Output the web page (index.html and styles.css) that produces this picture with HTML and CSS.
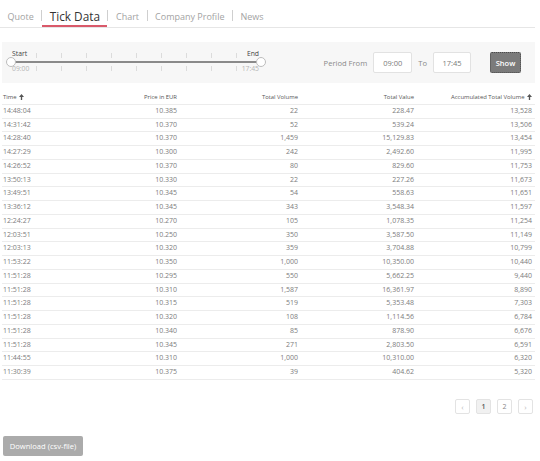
FILE: index.html
```html
<!DOCTYPE html>
<html>
<head>
<meta charset="utf-8">
<link rel="stylesheet" href="styles.css">
</head>
<body>
<div class="page">
  <nav class="tabs">
    <a class="tab">Quote</a><span class="sep"></span>
    <a class="tab active">Tick Data</a><span class="sep"></span>
    <a class="tab">Chart</a><span class="sep"></span>
    <a class="tab">Company Profile</a><span class="sep"></span>
    <a class="tab">News</a>
  </nav>

  <section class="panel">
    <div class="slider">
      <span class="lbl lbl-start">Start</span>
      <span class="lbl lbl-end">End</span>
      <span class="val val-start">09:00</span>
      <span class="val val-end">17:45</span>
      <div class="track"></div>
      <div class="ticks ticks-top"><i></i><i></i><i></i><i></i><i></i><i></i><i></i><i></i><i></i></div>
      <div class="ticks ticks-bottom"><i></i><i></i><i></i><i></i><i></i><i></i><i></i><i></i><i></i></div>
      <span class="handle handle-start"></span>
      <span class="handle handle-end"></span>
    </div>
    <div class="period">
      <span class="plabel">Period From</span>
      <span class="input">09:00</span>
      <span class="plabel">To</span>
      <span class="input">17:45</span>
      <button class="show">Show</button>
    </div>
  </section>

  <table class="ticks-table">
    <colgroup>
      <col class="c1"><col class="c2"><col class="c3"><col class="c4"><col class="c5">
    </colgroup>
    <thead>
      <tr>
        <th class="left">Time <svg class="arrow" viewBox="0 0 6 7" width="5" height="6"><path d="M3 0 L6 3.4 H3.8 V7 H2.2 V3.4 H0 Z" fill="#555"/></svg></th>
        <th>Price in EUR</th>
        <th>Total Volume</th>
        <th>Total Value</th>
        <th>Accumulated Total Volume <svg class="arrow" viewBox="0 0 6 7" width="5" height="6"><path d="M3 0 L6 3.4 H3.8 V7 H2.2 V3.4 H0 Z" fill="#555"/></svg></th>
      </tr>
    </thead>
    <tbody>
      <tr><td class="left">14:48:04</td><td>10.385</td><td>22</td><td>228.47</td><td>13,528</td></tr>
      <tr><td class="left">14:31:42</td><td>10.370</td><td>52</td><td>539.24</td><td>13,506</td></tr>
      <tr><td class="left">14:28:40</td><td>10.370</td><td>1,459</td><td>15,129.83</td><td>13,454</td></tr>
      <tr><td class="left">14:27:29</td><td>10.300</td><td>242</td><td>2,492.60</td><td>11,995</td></tr>
      <tr><td class="left">14:26:52</td><td>10.370</td><td>80</td><td>829.60</td><td>11,753</td></tr>
      <tr><td class="left">13:50:13</td><td>10.330</td><td>22</td><td>227.26</td><td>11,673</td></tr>
      <tr><td class="left">13:49:51</td><td>10.345</td><td>54</td><td>558.63</td><td>11,651</td></tr>
      <tr><td class="left">13:36:12</td><td>10.345</td><td>343</td><td>3,548.34</td><td>11,597</td></tr>
      <tr><td class="left">12:24:27</td><td>10.270</td><td>105</td><td>1,078.35</td><td>11,254</td></tr>
      <tr><td class="left">12:03:51</td><td>10.250</td><td>350</td><td>3,587.50</td><td>11,149</td></tr>
      <tr><td class="left">12:03:13</td><td>10.320</td><td>359</td><td>3,704.88</td><td>10,799</td></tr>
      <tr><td class="left">11:53:22</td><td>10.350</td><td>1,000</td><td>10,350.00</td><td>10,440</td></tr>
      <tr><td class="left">11:51:28</td><td>10.295</td><td>550</td><td>5,662.25</td><td>9,440</td></tr>
      <tr><td class="left">11:51:28</td><td>10.310</td><td>1,587</td><td>16,361.97</td><td>8,890</td></tr>
      <tr><td class="left">11:51:28</td><td>10.315</td><td>519</td><td>5,353.48</td><td>7,303</td></tr>
      <tr><td class="left">11:51:28</td><td>10.320</td><td>108</td><td>1,114.56</td><td>6,784</td></tr>
      <tr><td class="left">11:51:28</td><td>10.340</td><td>85</td><td>878.90</td><td>6,676</td></tr>
      <tr><td class="left">11:51:28</td><td>10.345</td><td>271</td><td>2,803.50</td><td>6,591</td></tr>
      <tr><td class="left">11:44:55</td><td>10.310</td><td>1,000</td><td>10,310.00</td><td>6,320</td></tr>
      <tr><td class="left">11:30:39</td><td>10.375</td><td>39</td><td>404.62</td><td>5,320</td></tr>
    </tbody>
  </table>

  <div class="pager">
    <span class="pg arrowpg">&#8249;</span>
    <span class="pg current">1</span>
    <span class="pg">2</span>
    <span class="pg arrowpg">&#8250;</span>
  </div>

  <button class="download">Download (csv-file)</button>
</div>
</body>
</html>
```

FILE: styles.css
```css
* { box-sizing: border-box; }
html, body { margin: 0; padding: 0; background: #fff; }
body { font-family: "Open Sans", "DejaVu Sans", sans-serif; color: #555; }

.page { width: 535px; }

/* tabs */
.tabs {
  display: flex;
  align-items: stretch;
  height: 28px;
  padding-top: 5px;
  border-bottom: 1px solid #e6e6e6;
}
.tab {
  display: flex;
  align-items: center;
  padding: 0 7.5px;
  font-size: 9px;
  color: #a3a3a3;
}
.tab.active {
  font-size: 11.8px;
  color: #333;
  box-shadow: inset 0 -2px 0 #d9596a;
}
.sep {
  align-self: center;
  width: 1px;
  height: 11px;
  background: #cfcfcf;
  margin-top: -1px;
}

/* panel */
.panel {
  margin: 14px 0 0 2px;
  height: 41px;
  background: #f7f7f7;
  display: flex;
  align-items: center;
  padding-right: 14px;
}
.slider {
  position: relative;
  width: 262px;
  height: 41px;
  margin-left: 4px;
}
.lbl, .val {
  position: absolute;
  font-size: 6.8px;
  line-height: 8px;
}
.lbl { color: #444; top: 8px; }
.val { color: #b5b5b5; top: 23px; }
.lbl-start, .val-start { left: 6px; }
.lbl-end, .val-end { right: 9px; }
.track {
  position: absolute;
  left: 5px;
  width: 250px;
  top: 19px;
  height: 2px;
  background: #8a8a8a;
}
.ticks {
  position: absolute;
  left: 29.5px;
  display: flex;
  gap: 24px;
}
.ticks i { display: block; width: 1px; height: 5px; background: #dcdcdc; }
.ticks-top { top: 10.5px; }
.ticks-bottom { top: 24px; }
.handle {
  position: absolute;
  top: 15px;
  width: 10px;
  height: 10px;
  border-radius: 50%;
  background: #fff;
  border: 1px solid #bdbdbd;
}
.handle-start { left: 0; }
.handle-end { left: 250px; }

.period {
  margin-left: auto;
  display: flex;
  align-items: center;
}
.plabel { font-size: 7.6px; color: #8a8a8a; margin-right: 6px; }
.input {
  width: 39px;
  height: 21px;
  background: #fff;
  border: 1px solid #e2e2e2;
  border-radius: 2px;
  font-size: 7.5px;
  color: #7a7a7a;
  display: flex;
  align-items: center;
  justify-content: center;
  margin-right: 6px;
}
.input + .plabel + .input { width: 38px; margin-right: 19px; }
.show {
  width: 31px;
  height: 21px;
  padding: 0;
  background: #7b7b7b;
  border: 1px dotted #4a4a4a;
  border-radius: 2px;
  color: #fff;
  font-family: inherit;
  font-size: 7.5px;
  font-weight: 600;
}

/* table */
.ticks-table {
  margin: 8px 0 0 2px;
  width: 533px;
  border-collapse: collapse;
  table-layout: fixed;
}
.c1 { width: 90px; }
.c2 { width: 85px; }
.c3 { width: 121px; }
.c4 { width: 116px; }
.c5 { width: 121px; }
.ticks-table th, .ticks-table td {
  padding: 0;
  text-align: right;
  white-space: nowrap;
  border-bottom: 1px solid #ececec;
  line-height: 12.75px;
}
.ticks-table th:last-child, .ticks-table td:last-child { padding-right: 3px; }
.ticks-table th {
  font-size: 5.9px;
  font-weight: 400;
  color: #555;
}
.ticks-table td {
  font-size: 7px;
  color: #7d7d7d;
}
.ticks-table .left { text-align: left; padding-left: 1px; }
.arrow { vertical-align: -1px; margin-left: 1px; }

/* pager */
.pager {
  display: flex;
  justify-content: flex-end;
  gap: 6px;
  margin-top: 19px;
  padding-right: 2px;
}
.pg {
  width: 15px;
  height: 15px;
  border: 1px solid #e3e3e3;
  border-radius: 2px;
  display: flex;
  align-items: center;
  justify-content: center;
  font-size: 7px;
  color: #888;
}
.pg.current { background: #f1f1f1; color: #555; font-weight: 600; }
.arrowpg { color: #bbb; font-size: 8px; }

.download {
  display: block;
  margin: 22px 0 0 3px;
  width: 80px;
  height: 20px;
  padding: 0;
  background: #ababab;
  border: none;
  border-radius: 2px;
  color: #fff;
  font-family: inherit;
  font-size: 7.6px;
}
```
